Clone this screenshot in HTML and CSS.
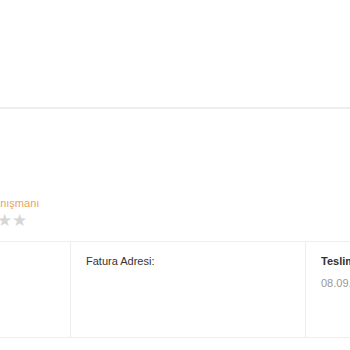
FILE: index.html
```html
<!DOCTYPE html>
<html lang="tr">
<head>
    <meta charset="UTF-8">
    <meta name="viewport" content="width=device-width, initial-scale=1.0">
    <title>Sipariş Detayı</title>
    <link rel="stylesheet" href="styles.css">
</head>
<body>

    <!-- Top area -->
    <header class="top"></header>

    <!-- Consultant info -->
    <section class="consultant">
        <div class="consultant-role">Satış Danışmanı</div>
        <div class="stars">
            <span class="star">★</span>
            <span class="star">★</span>
            <span class="star">★</span>
            <span class="star">★</span>
            <span class="star">★</span>
        </div>
    </section>

    <!-- Order info table -->
    <section class="order-info">
        <div class="cell"></div>
        <div class="cell">
            <div class="label">Fatura Adresi:</div>
        </div>
        <div class="cell">
            <div class="label strong">Teslim Tarihi:</div>
            <div class="value">08.09.2023</div>
        </div>
    </section>

</body>
</html>
```

FILE: styles.css
```css
* {
    margin: 0;
    padding: 0;
    box-sizing: border-box;
}

body {
    font-family: "Liberation Sans", Arial, sans-serif;
    background-color: #fff;
    color: #333;
    overflow: hidden;
}

.top {
    height: 109px;
    border-bottom: 2px solid #eee;
}

.consultant {
    margin-left: -42px;
    padding-top: 88px;
}

.consultant-role {
    font-size: 11px;
    line-height: 13px;
    color: #eba35f;
    white-space: nowrap;
}

.stars {
    display: flex;
    margin-top: 1px;
    margin-left: -6px;
}

.star {
    width: 15px;
    font-family: "DejaVu Sans", sans-serif;
    font-size: 17px;
    line-height: 18px;
    text-align: center;
    color: #d6d6d6;
}

.order-info {
    display: grid;
    grid-template-columns: 70px 235px 1fr;
    height: 97px;
    margin-top: 12px;
    border-top: 1px solid #eee;
    border-bottom: 1px solid #eee;
    white-space: nowrap;
    overflow: hidden;
}

.cell {
    padding: 13px 15px;
    border-left: 1px solid #eee;
}

.cell:first-child {
    border-left: none;
}

.label {
    font-size: 11px;
    line-height: 13px;
    color: #333;
}

.label.strong {
    font-weight: bold;
}

.value {
    margin-top: 9px;
    font-size: 11px;
    line-height: 13px;
    color: #999;
}
```
